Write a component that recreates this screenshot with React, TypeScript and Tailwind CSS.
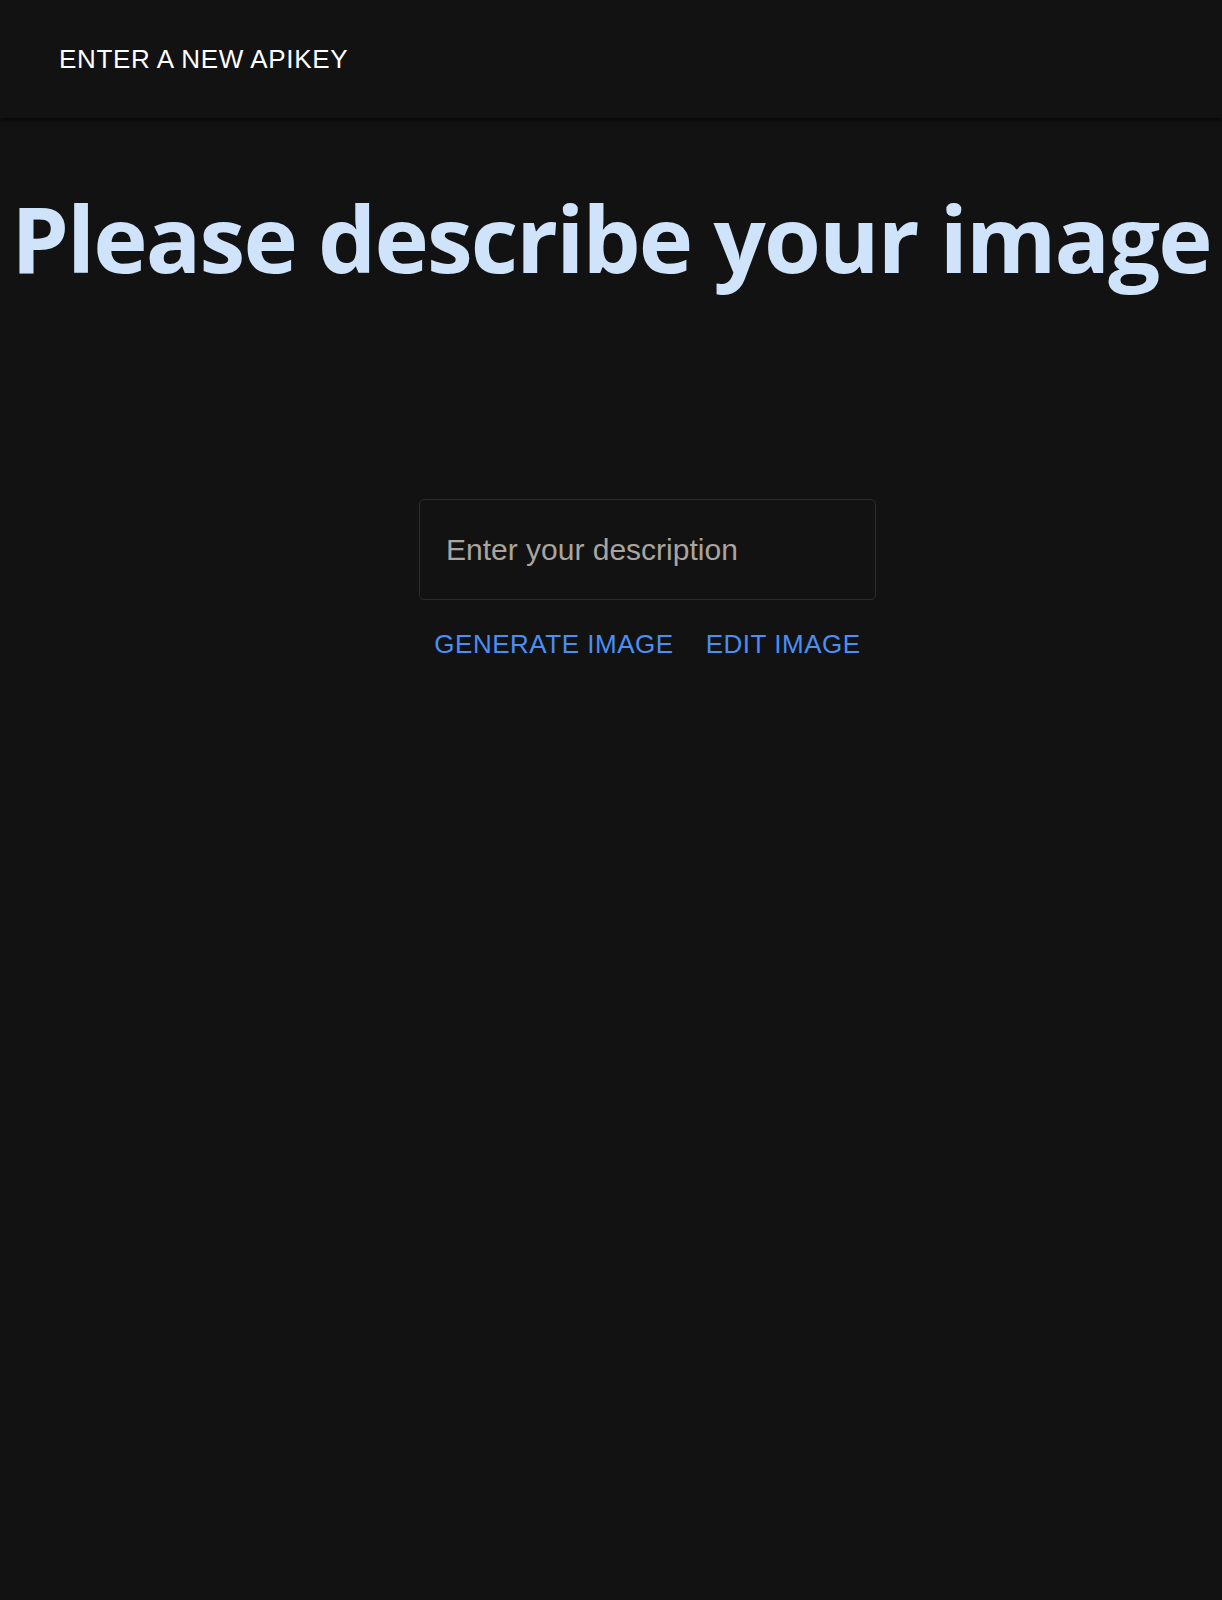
import * as React from "react";

const App = () => {
  const [desc, setDesc] = React.useState("");

  return (
    <div className="min-h-[1600px] w-full bg-[#121212] font-['Liberation_Sans',Arial,sans-serif]">
      <header className="flex h-[118px] items-center bg-[#121212] px-[59px] shadow-[0_2px_4px_rgba(0,0,0,0.6)]">
        <button className="text-[26px] uppercase leading-none tracking-[0.025em] text-white">
          Enter a new apikey
        </button>
      </header>

      <h1 className="mt-[74px] whitespace-nowrap text-center font-['Open_Sans','Noto_Sans',sans-serif] text-[92px] font-bold leading-none tracking-[-0.02em] text-[#cfe3fb]">
        Please describe your image
      </h1>

      <div className="ml-[419px] mt-[215px] flex w-[457px] flex-col items-center">
        <input
          value={desc}
          onChange={(e) => setDesc(e.target.value)}
          placeholder="Enter your description"
          className="h-[101px] w-full rounded-[5px] border border-[#2c2c2c] bg-[#121212] px-[26px] text-[30px] text-white outline-none placeholder:text-[#a9a59e]"
        />
        <div className="mt-[31px] flex gap-[32px]">
          <button className="text-[26px] uppercase leading-none tracking-[0.02em] text-[#4a8ff5]">
            Generate image
          </button>
          <button className="text-[26px] uppercase leading-none tracking-[0.02em] text-[#4a8ff5]">
            Edit image
          </button>
        </div>
      </div>
    </div>
  );
};

export default App;
